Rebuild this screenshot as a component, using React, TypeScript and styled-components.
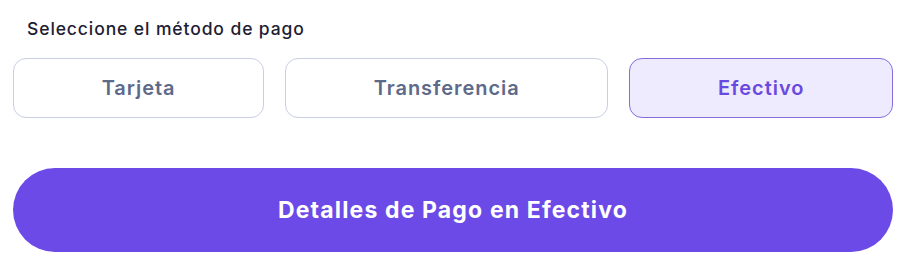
import React, { useState } from "react";
import styled, { createGlobalStyle } from "styled-components";

const Global = createGlobalStyle`
  html, body { margin: 0; padding: 0; background: #ffffff; }
  body { font-family: Inter, "Noto Sans", sans-serif; }
  * { box-sizing: border-box; }
`;

const Wrapper = styled.div`
  width: 922px;
  padding: 13px 29px 0 13px;
  display: flex;
  flex-direction: column;
`;

const Label = styled.div`
  margin: 4px 0 0 14px;
  height: 24px;
  line-height: 24px;
  font-size: 17.5px;
  font-weight: 500;
  color: #1d2033;
  letter-spacing: 0.9px;
`;

const Row = styled.div`
  display: flex;
  gap: 21px;
  margin-top: 17px;
`;

const Option = styled.button<{ $active: boolean }>`
  flex: 1 1 auto;
  height: 60px;
  border-radius: 13px;
  border: 1.5px solid ${(p) => (p.$active ? "#866cdc" : "#c9cfe0")};
  background: ${(p) => (p.$active ? "#efebff" : "#ffffff")};
  color: ${(p) => (p.$active ? "#6a4ade" : "#5d6a8a")};
  font-family: Inter, "Noto Sans", sans-serif;
  font-size: 20px;
  font-weight: 600;
  letter-spacing: 0.95px;
  cursor: pointer;
  padding: 0;
`;

const Submit = styled.button`
  margin-top: 50px;
  height: 84px;
  width: 100%;
  border: none;
  border-radius: 42px;
  background: #6b4ae8;
  color: #ffffff;
  font-family: Inter, "Noto Sans", sans-serif;
  font-size: 23px;
  font-weight: 700;
  letter-spacing: 1.15px;
  cursor: pointer;
`;

const methods = ["Tarjeta", "Transferencia", "Efectivo"];

export default function App() {
  const [selected, setSelected] = useState("Efectivo");
  return (
    <>
      <Global />
      <Wrapper>
        <Label>Seleccione el método de pago</Label>
        <Row>
          {methods.map((m) => (
            <Option key={m} $active={selected === m} onClick={() => setSelected(m)}>
              {m}
            </Option>
          ))}
        </Row>
        <Submit>Detalles de Pago en {selected}</Submit>
      </Wrapper>
    </>
  );
}
